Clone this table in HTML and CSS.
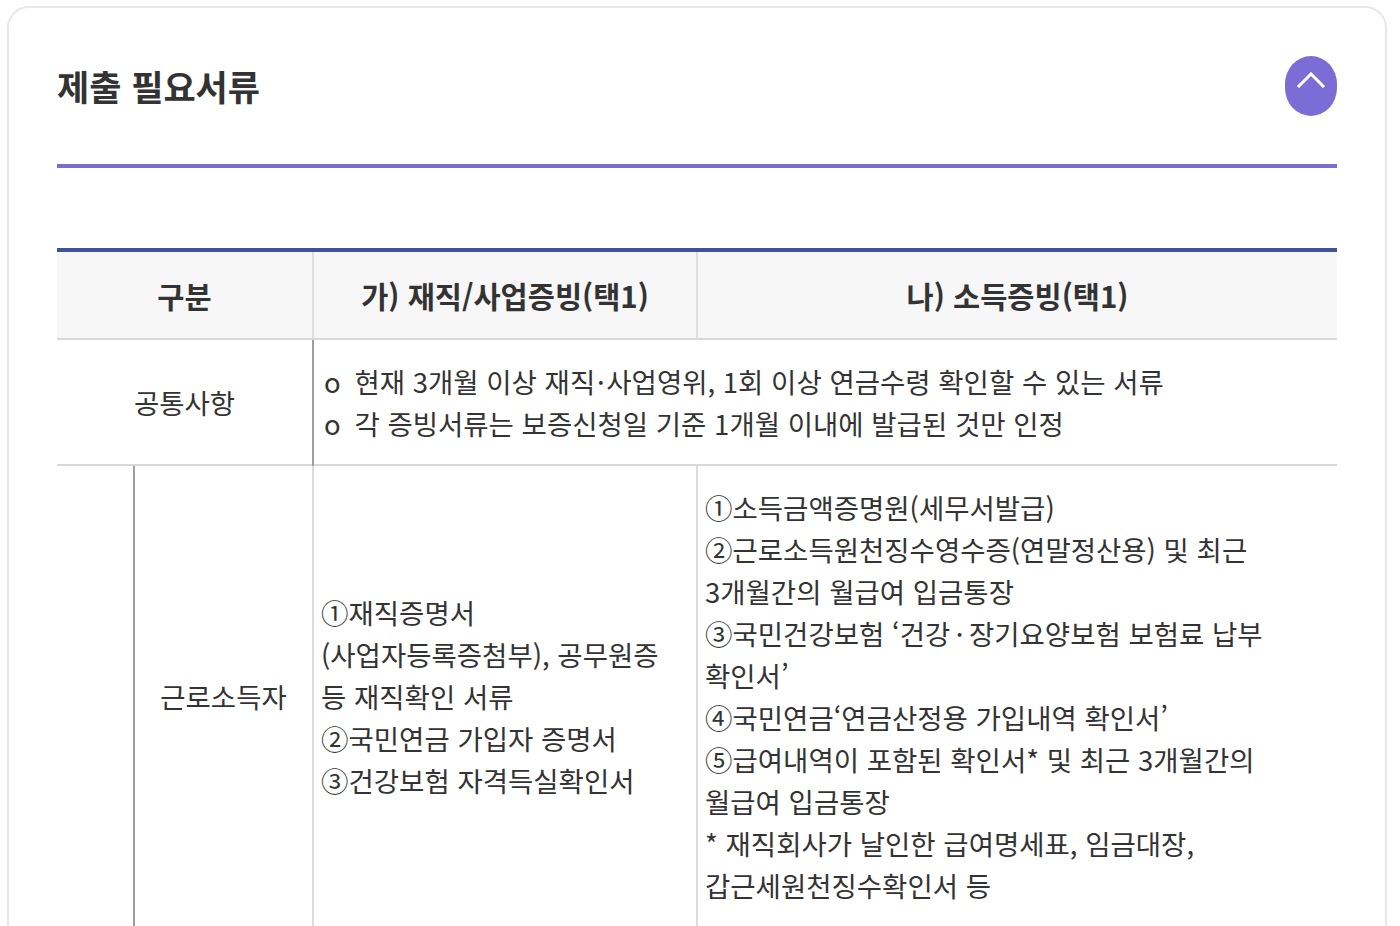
FILE: index.html
```html
<!DOCTYPE html>
<html lang="ko">
<head>
<meta charset="utf-8">
<title>제출 필요서류</title>
<link rel="stylesheet" href="styles.css">
</head>
<body>
<section class="card">
  <div class="card-head">
    <h2 class="card-title">제출 필요서류</h2>
    <button class="toggle" type="button" aria-label="접기">
      <svg width="30" height="16" viewBox="0 0 30 16"><polyline points="2,15 15,2 28,15" fill="none" stroke="#ffffff" stroke-width="3"/></svg>
    </button>
  </div>
  <table class="docs">
    <colgroup>
      <col class="c-a"><col class="c-b"><col class="c-c"><col class="c-d">
    </colgroup>
    <thead>
      <tr>
        <th colspan="2">구분</th>
        <th>가) 재직/사업증빙(택1)</th>
        <th>나) 소득증빙(택1)</th>
      </tr>
    </thead>
    <tbody>
      <tr>
        <td colspan="2" class="label">공통사항</td>
        <td colspan="2" class="common dark-left">o&ensp;현재 3개월 이상 재직&#8202;·&#8202;사업영위, 1회 이상 연금수령 확인할 수 있는 서류<br>o&ensp;각 증빙서류는 보증신청일 기준 1개월 이내에 발급된 것만 인정</td>
      </tr>
      <tr>
        <td class="group"></td>
        <td class="label dark-left">근로소득자</td>
        <td class="list">①재직증명서<br>(사업자등록증첨부), 공무원증 등 재직확인 서류<br>②국민연금 가입자 증명서<br>③건강보험 자격득실확인서</td>
        <td class="list">①소득금액증명원(세무서발급)<br>②근로소득원천징수영수증(연말정산용) 및 최근 3개월간의 월급여 입금통장<br>③국민건강보험 ‘건강&#8201;·&#8201;장기요양보험 보험료 납부 확인서’<br>④국민연금‘연금산정용 가입내역 확인서’<br>⑤급여내역이 포함된 확인서* 및 최근 3개월간의 월급여 입금통장<br>* 재직회사가 날인한 급여명세표, 임금대장,<br>갑근세원천징수확인서 등</td>
      </tr>
    </tbody>
  </table>
</section>
</body>
</html>
```

FILE: styles.css
```css
* { box-sizing: border-box; }
html, body { margin: 0; padding: 0; background: #ffffff; }
body {
  font-family: "Noto Sans CJK KR", "Noto Sans", sans-serif;
  color: #333333;
}
.card {
  margin: 6px 13px 0 7px;
  padding: 0 48px 60px;
  border: 2px solid #e7e7e7;
  border-radius: 22px;
  background: #ffffff;
}
.card-head {
  display: flex;
  justify-content: space-between;
  align-items: center;
  padding: 48px 0 48px;
  border-bottom: 4px solid #7b6bd4;
}
.card-title {
  margin: 0;
  font-size: 35px;
  font-weight: 700;
  line-height: 40px;
  color: #333333;
}
.toggle {
  width: 52px;
  height: 60px;
  border: 0;
  padding: 0;
  border-radius: 26px / 28px;
  background: #7c6cd6;
  display: flex;
  align-items: center;
  justify-content: center;
}
.toggle svg { display: block; margin-bottom: 12px; }
.docs {
  width: 100%;
  margin-top: 80px;
  border-collapse: collapse;
  table-layout: fixed;
  border-top: 4px solid #3d5399;
  font-size: 27.5px;
  line-height: 42px;
  word-break: keep-all;
}
.c-a { width: 77px; }
.c-b { width: 179px; }
.c-c { width: 384px; }
.c-d { width: 640px; }
.docs th {
  height: 89px;
  background: #f7f7f7;
  font-size: 29.5px;
  font-weight: 700;
  color: #333333;
  text-align: center;
  vertical-align: middle;
  border-bottom: 2px solid #d9d9d9;
  padding: 0;
}
.docs th + th { border-left: 2px solid #dedede; }
.docs td {
  border-top: 2px solid #d9d9d9;
  vertical-align: middle;
  padding: 20px 7px;
  font-weight: 400;
  color: #333333;
}
.docs td.label { text-align: center; padding: 20px 0; }
.docs td.common { padding: 20px 10px; }
.docs td.list { border-left: 2px solid #dcdcdc; }
.docs td.dark-left { border-left: 2px solid #9e9e9e; }
```
